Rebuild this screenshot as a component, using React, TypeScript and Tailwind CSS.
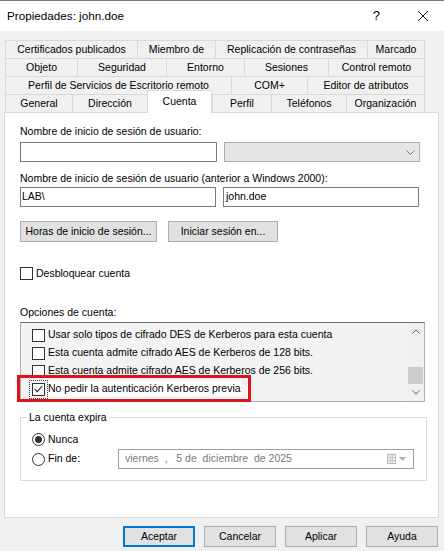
import React from "react";

type Tab = { label: string; w: string };

const rows: Tab[][] = [
  [
    { label: "Certificados publicados", w: "w-[132px]" },
    { label: "Miembro de", w: "w-[78px]" },
    { label: "Replicación de contraseñas", w: "w-[152px]" },
    { label: "Marcado", w: "w-[58px]" },
  ],
  [
    { label: "Objeto", w: "w-[72px]" },
    { label: "Seguridad", w: "w-[89px]" },
    { label: "Entorno", w: "w-[78px]" },
    { label: "Sesiones", w: "w-[84px]" },
    { label: "Control remoto", w: "w-[97px]" },
  ],
  [
    { label: "Perfil de Servicios de Escritorio remoto", w: "w-[226px]" },
    { label: "COM+", w: "w-[76px]" },
    { label: "Editor de atributos", w: "w-[118px]" },
  ],
];

const lastRow: Tab[] = [
  { label: "General", w: "w-[67px]" },
  { label: "Dirección", w: "w-[75px]" },
  { label: "Cuenta", w: "w-[65px]" },
  { label: "Perfil", w: "w-[59px]" },
  { label: "Teléfonos", w: "w-[75px]" },
  { label: "Organización", w: "w-[79px]" },
];

function CheckMark() {
  return (
    <svg width="9" height="8" viewBox="0 0 9 8" className="block">
      <path d="M0.8 4.2 L3.3 6.6 L8.2 1" fill="none" stroke="#222" strokeWidth="1.1" />
    </svg>
  );
}

function Box({ checked, focus }: { checked?: boolean; focus?: boolean }) {
  return (
    <div
      className={
        "w-[13px] h-[13px] border border-[#333] bg-white flex items-center justify-center shrink-0" +
        (focus ? " outline-1 outline-dotted outline-offset-[2px] outline-[#444]" : "")
      }
    >
      {checked && <CheckMark />}
    </div>
  );
}

function Radio({ on }: { on?: boolean }) {
  return (
    <div className="w-[13px] h-[13px] rounded-full border border-[#333] bg-white flex items-center justify-center shrink-0">
      {on && <div className="w-[7px] h-[7px] rounded-full bg-[#333]" />}
    </div>
  );
}

function Chevron({ up }: { up?: boolean }) {
  return (
    <svg width="8" height="5" viewBox="0 0 8 5" className="block">
      <path d={up ? "M0.5 4.5 L4 1 L7.5 4.5" : "M0.5 0.5 L4 4 L7.5 0.5"} fill="none" stroke="#606060" strokeWidth="1" />
    </svg>
  );
}

function Btn({ children, w, primary }: { children: React.ReactNode; w: string; primary?: boolean }) {
  return (
    <div
      className={
        w +
        " h-[21px] bg-[#e1e1e1] flex items-center justify-center " +
        (primary ? "border-2 border-[#0078d7]" : "border border-[#adadad]")
      }
    >
      {children}
    </div>
  );
}

export default function App() {
  const options = [
    "Usar solo tipos de cifrado DES de Kerberos para esta cuenta",
    "Esta cuenta admite cifrado AES de Kerberos de 128 bits.",
    "Esta cuenta admite cifrado AES de Kerberos de 256 bits.",
  ];

  return (
    <div className="w-[444px] h-[551px] bg-[#f0f0f0] text-[10.5px] text-black overflow-hidden font-['Liberation_Sans',Arial,sans-serif]">
      {/* title bar */}
      <div className="h-[31px] bg-white border-t border-[#7a7a7a] flex items-center pl-[7px] pr-[16px]">
        <span className="text-[11.7px]">Propiedades: john.doe</span>
        <span className="ml-auto text-[13px] mr-[38px]">?</span>
        <svg width="10" height="10" viewBox="0 0 10 10">
          <path d="M0 0 L10 10 M10 0 L0 10" stroke="#111" strokeWidth="1" />
        </svg>
      </div>

      {/* tabs */}
      <div className="pt-[9px] pl-[5px]">
        {rows.map((r, i) => (
          <div key={i} className="flex h-[18px]">
            {r.map((t, j) => (
              <div
                key={t.label}
                className={
                  t.w +
                  " h-[18px] border-t border-l border-[#d9d9d9] flex items-center justify-center whitespace-nowrap" +
                  (j === r.length - 1 ? " border-r" : "")
                }
              >
                {t.label}
              </div>
            ))}
          </div>
        ))}
        <div className="flex h-[18px] items-end">
          {lastRow.map((t, j) =>
            t.label === "Cuenta" ? (
              <div
                key={t.label}
                className={t.w + " h-[23px] -mb-px relative z-10 bg-white border-t border-l border-r border-[#d9d9d9] flex items-start pt-[3px] justify-center"}
              >
                {t.label}
              </div>
            ) : (
              <div
                key={t.label}
                className={
                  t.w +
                  " h-[18px] border-t border-l border-[#d9d9d9] flex items-center justify-center" +
                  (j === lastRow.length - 1 ? " border-r" : "")
                }
              >
                {t.label}
              </div>
            )
          )}
        </div>
      </div>

      {/* panel */}
      <div className="ml-[4px] w-[435px] h-[406px] bg-white border border-[#d9d9d9] pl-[15px] flex flex-col">
        <div className="mt-[11px] h-[14px] leading-[14px]">Nombre de inicio de sesión de usuario:</div>
        <div className="mt-[4px] flex gap-[7px]">
          <div className="w-[197px] h-[20px] border border-[#7a7a7a] bg-white" />
          <div className="w-[196px] h-[20px] border border-[#adadad] bg-[#e6e6e6] flex items-center justify-end pr-[4px]">
            <svg width="9" height="5" viewBox="0 0 9 5">
              <path d="M0.5 0.5 L4.5 4.5 L8.5 0.5" fill="none" stroke="#7a7a7a" strokeWidth="1" />
            </svg>
          </div>
        </div>
        <div className="mt-[9px] h-[14px] leading-[14px]">
          Nombre de inicio de sesión de usuario (anterior a Windows 2000):
        </div>
        <div className="mt-[2px] flex gap-[7px]">
          <div className="w-[196px] h-[20px] border border-[#7a7a7a] bg-white flex items-center pl-[1px]">LAB\</div>
          <div className="w-[196px] h-[20px] border border-[#7a7a7a] bg-white flex items-center pl-[2px]">john.doe</div>
        </div>
        <div className="mt-[14px] flex gap-[11px]">
          <Btn w="w-[137px]">Horas de inicio de sesión...</Btn>
          <Btn w="w-[110px]">Iniciar sesión en...</Btn>
        </div>
        <div className="mt-[25px] h-[13px] flex items-center gap-[3px]">
          <Box />
          <span>Desbloquear cuenta</span>
        </div>
        <div className="mt-[25px] h-[14px] leading-[14px]">Opciones de cuenta:</div>

        {/* listbox */}
        <div className="relative mt-[3px] w-[405px] h-[80px] border border-[#adadad] border-t-[#6f6f6f] bg-[#f3f3f3] flex">
          <div className="flex-1 pt-[3px] pl-[11px]">
            {options.map((o) => (
              <div key={o} className="h-[18px] flex items-center gap-[3px] whitespace-nowrap">
                <Box />
                <span>{o}</span>
              </div>
            ))}
            <div className="h-[18px] flex items-center gap-[3px] whitespace-nowrap">
              <Box checked focus />
              <span className="bg-white">No pedir la autenticación Kerberos previa</span>
            </div>
          </div>
          <div className="w-[17px] flex flex-col bg-[#f0f0f0]">
            <div className="h-[17px] flex items-center justify-center">
              <Chevron up />
            </div>
            <div className="flex-1" />
            <div className="h-[17px] mx-[1px] bg-[#cdcdcd]" />
            <div className="h-[17px] flex items-center justify-center">
              <Chevron />
            </div>
          </div>
          <div className="absolute left-[-4px] top-[52px] w-[234px] h-[27px] border-[3px] border-[#e0121c]" />
        </div>

        {/* group box */}
        <fieldset className="mt-[8px] w-[407px] border border-[#dcdcdc] pb-[11px]">
          <legend className="ml-[6px] px-[2px] h-[14px] leading-[14px]">La cuenta expira</legend>
          <div className="mt-[9px] ml-[11px] h-[13px] flex items-center gap-[3px]">
            <Radio on />
            <span>Nunca</span>
          </div>
          <div className="mt-[3px] ml-[11px] h-[20px] flex items-center">
            <Radio />
            <span className="ml-[3px] w-[70px]">Fin de:</span>
            <div className="w-[296px] h-[20px] border border-[#a0a0a0] bg-white flex items-center pl-[6px] pr-[6px] text-[#7a7a7a] whitespace-pre">
              <span>viernes  ,   5 de  diciembre  de 2025</span>
              <svg className="ml-auto" width="20" height="10" viewBox="0 0 20 10">
                <rect x="0.5" y="0.5" width="8" height="9" fill="#f4f4f4" stroke="#b5b5b5" />
                <path d="M0.5 3.5 H8.5 M0.5 6.5 H8.5 M3.5 0.5 V9.5 M5.5 0.5 V9.5" stroke="#c8c8c8" strokeWidth="1" />
                <path d="M12 3 L19 3 L15.5 7 Z" fill="#b0b0b0" />
              </svg>
            </div>
          </div>
        </fieldset>
      </div>

      {/* bottom buttons */}
      <div className="mt-[8px] flex justify-end gap-[9px] pr-[6px]">
        <Btn w="w-[72px]" primary>Aceptar</Btn>
        <Btn w="w-[72px]">Cancelar</Btn>
        <Btn w="w-[72px]">Aplicar</Btn>
        <Btn w="w-[72px]">Ayuda</Btn>
      </div>
    </div>
  );
}
